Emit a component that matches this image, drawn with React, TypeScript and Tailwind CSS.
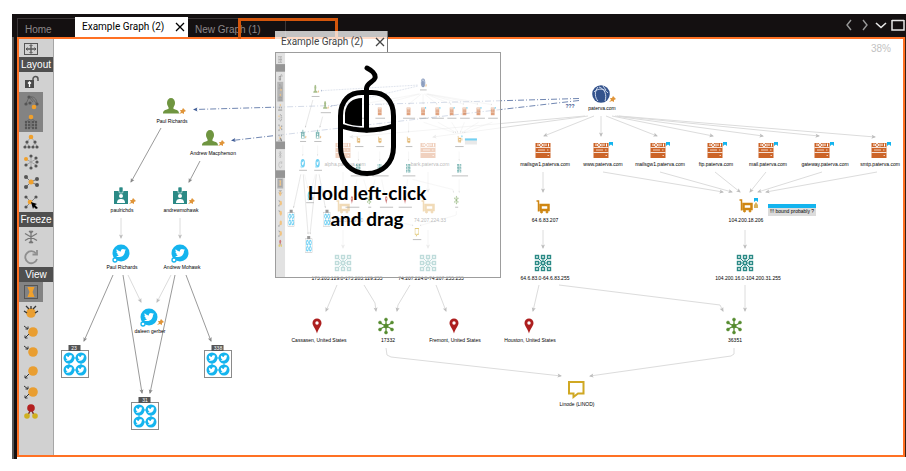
import React from "react";
import { FaTwitter } from "react-icons/fa";

type Point = [number, number];
type Kind =
  | "person"
  | "badge"
  | "twitter"
  | "globe"
  | "server"
  | "address"
  | "netblock"
  | "place"
  | "hub"
  | "phrase"
  | "group";

interface GraphNode {
  kind: Kind;
  x: number;
  y: number;
  label: string;
  labelX: number;
  labelY: number;
  pin?: boolean;
  mark?: boolean;
}

const nodes: GraphNode[] = [
  { kind: "person", x: 171, y: 106, label: "Paul Richards", labelX: 172, labelY: 121, pin: true },
  { kind: "person", x: 210, y: 138, label: "Andrew Macpherson", labelX: 213, labelY: 153, pin: true },
  { kind: "badge", x: 121, y: 196, label: "paulrichds", labelX: 122, labelY: 210, pin: true },
  { kind: "badge", x: 180, y: 196, label: "andrewmohawk", labelX: 181, labelY: 210, pin: true },
  { kind: "twitter", x: 121, y: 253, label: "Paul Richards", labelX: 122, labelY: 267 },
  { kind: "twitter", x: 180, y: 253, label: "Andrew Mohawk", labelX: 182, labelY: 267 },
  { kind: "twitter", x: 149, y: 317, label: "daleen gerber", labelX: 150, labelY: 331, pin: true },
  { kind: "globe", x: 601, y: 94, label: "paterva.com", labelX: 602, labelY: 108, pin: true },
  { kind: "server", x: 343, y: 150, label: "alpha.paterva.com", labelX: 345, labelY: 164 },
  { kind: "server", x: 428, y: 150, label: "bark.paterva.com", labelX: 430, labelY: 164 },
  { kind: "server", x: 543, y: 150, label: "mailsgw1.paterva.com", labelX: 545, labelY: 164 },
  { kind: "server", x: 601, y: 150, label: "www.paterva.com", labelX: 603, labelY: 164, mark: true },
  { kind: "server", x: 658, y: 150, label: "mailsgw1.paterva.com", labelX: 660, labelY: 164, mark: true },
  { kind: "server", x: 715, y: 150, label: "ftp.paterva.com", labelX: 716, labelY: 164, mark: true },
  { kind: "server", x: 766, y: 150, label: "mail.paterva.com", labelX: 768, labelY: 164, mark: true },
  { kind: "server", x: 822, y: 150, label: "gateway.paterva.com", labelX: 825, labelY: 164, mark: true },
  { kind: "server", x: 879, y: 150, label: "smtp.paterva.com", labelX: 880, labelY: 164, mark: true },
  { kind: "address", x: 343, y: 207, label: "173.203.129.90", labelX: 346, labelY: 220 },
  { kind: "address", x: 428, y: 207, label: "74.207.224.33", labelX: 430, labelY: 220 },
  { kind: "address", x: 543, y: 207, label: "64.6.83.207", labelX: 545, labelY: 220 },
  { kind: "address", x: 746, y: 206, label: "104.200.18.206", labelX: 746, labelY: 220, mark: true },
  { kind: "netblock", x: 343, y: 263, label: "173.203.129.0-173.203.129.255", labelX: 347, labelY: 278 },
  { kind: "netblock", x: 428, y: 263, label: "74.207.224.0-74.207.255.255", labelX: 431, labelY: 278 },
  { kind: "netblock", x: 543, y: 263, label: "64.6.83.0-64.6.83.255", labelX: 545, labelY: 278 },
  { kind: "netblock", x: 745, y: 263, label: "104.200.16.0-104.200.31.255", labelX: 748, labelY: 278 },
  { kind: "place", x: 317, y: 326, label: "Cassasen, United States", labelX: 319, labelY: 340 },
  { kind: "place", x: 454, y: 326, label: "Fremont, United States", labelX: 455, labelY: 340 },
  { kind: "place", x: 529, y: 326, label: "Houston, United States", labelX: 530, labelY: 340 },
  { kind: "hub", x: 386, y: 326, label: "17332", labelX: 388, labelY: 340 },
  { kind: "hub", x: 734, y: 326, label: "36351", labelX: 735, labelY: 340 },
  { kind: "phrase", x: 576, y: 389, label: "Linode (LINOD)", labelX: 577, labelY: 404 },
  { kind: "group", x: 75, y: 364, label: "23", labelX: 74, labelY: 348 },
  { kind: "group", x: 145, y: 416, label: "31", labelX: 145, labelY: 400 },
  { kind: "group", x: 218, y: 364, label: "338", labelX: 218, labelY: 348 },
];

const strongEdges: Point[][] = [
  [[161, 128], [131, 182]],
  [[200, 161], [189, 182]],
  [[113, 275], [84, 341]],
  [[123, 275], [142, 393]],
  [[175, 275], [150, 393]],
  [[186, 275], [211, 341]],
];

const softEdges: Point[][] = [
  [[121, 218], [121, 238]],
  [[180, 218], [180, 238]],
  [[128, 275], [141, 302]],
  [[171, 275], [157, 302]],
  [[585, 116], [350, 137]],
  [[588, 116], [433, 137]],
  [[594, 116], [544, 136]],
  [[601, 116], [601, 136]],
  [[606, 116], [657, 136]],
  [[612, 116], [713, 136]],
  [[615, 116], [763, 136]],
  [[617, 116], [819, 136]],
  [[619, 116], [875, 137]],
  [[343, 172], [343, 192]],
  [[428, 172], [428, 192]],
  [[543, 172], [543, 192]],
  [[603, 172], [723, 192]],
  [[660, 172], [732, 192]],
  [[715, 172], [740, 192]],
  [[766, 172], [750, 192]],
  [[822, 172], [758, 192]],
  [[877, 172], [766, 192]],
  [[343, 230], [343, 248]],
  [[428, 230], [428, 248]],
  [[543, 230], [543, 248]],
  [[745, 230], [745, 248]],
  [[337, 285], [326, 311]],
  [[364, 285], [375, 303], [376, 311]],
  [[410, 285], [398, 305], [397, 311]],
  [[436, 285], [446, 311]],
  [[539, 285], [533, 311]],
  [[559, 285], [720, 305], [723, 311]],
  [[745, 285], [745, 311]],
  [[386, 348], [387, 355], [391, 357], [561, 376]],
  [[734, 348], [734, 354], [731, 356], [590, 376]],
];

const linkEdges: Point[][] = [
  [[579, 98.5], [194, 109.5]],
  [[579, 100.5], [232, 140.5]],
];

interface EdgeProps {
  points: Point[];
  color: string;
  head: string;
  dash?: string;
}

function Edge({ points, color, head, dash }: EdgeProps) {
  const [ex, ey] = points[points.length - 1];
  const [px, py] = points[points.length - 2];
  const angle = (Math.atan2(ey - py, ex - px) * 180) / Math.PI;
  return (
    <g>
      <polyline
        points={points.map((p) => p.join(",")).join(" ")}
        fill="none"
        stroke={color}
        strokeWidth={1}
        strokeDasharray={dash}
      />
      <path d="M1 0L-3.500 -2L-2.500 0L-3.500 2Z" fill={head} transform={`translate(${ex} ${ey}) rotate(${angle})`} />
    </g>
  );
}

function Bird({ x, y, size }: { x: number; y: number; size: number }) {
  return <FaTwitter x={x - size / 2} y={y - size / 2} size={size} color="#fff" />;
}

function Glyph({ kind }: { kind: Kind }) {
  switch (kind) {
    case "person":
      return (
        <g fill="#6f9540">
          <ellipse cx="0" cy="-3" rx="4" ry="5" />
          <path d="M-2.500 0H2.500V3C6 4 8 4.500 8 7.500H-8C-8 4.500 -6 4 -2.500 3Z" />
        </g>
      );
    case "badge":
      return (
        <g>
          <path d="M-7 -5H7V8H-7Z" fill="#2b8a86" />
          <rect x="-2" y="-9" width="4" height="6" rx="1" fill="#2b8a86" stroke="#fff" strokeWidth=".6" />
          <circle cx="0" cy="0" r="2" fill="#fff" />
          <path d="M-4 7C-4 3.500 -2 3 0 3S4 3.500 4 7Z" fill="#fff" />
        </g>
      );
    case "twitter":
      return (
        <g>
          <circle r="8.500" fill="#14b4ee" />
          <Bird x={0} y={0} size={10} />
          <circle cx="-6" cy="7" r="2" fill="#fff" stroke="#14b4ee" strokeWidth="1.300" />
        </g>
      );
    case "globe":
      return (
        <g fill="none" stroke="#dfe6f5" strokeWidth=".9">
          <circle r="8.800" fill="#33528c" stroke="none" />
          <path d="M-3 -7C-7 -2 -6 4 -3 7M-2 -7C4 -5 6 1 4 7M-7 -2C-3 -6 3 -6 7 -1M2 -8L5 -4" />
        </g>
      );
    case "server":
      return (
        <g>
          <rect x="-7.500" y="-7" width="15" height="15" fill="#cc6428" />
          <path d="M-7.500 -2.500H7.500M-7.500 2.500H7.500" stroke="#fff" strokeWidth=".8" />
          <circle cx="-2" cy="-5" r="1.500" fill="none" stroke="#fff" />
          <path d="M1 -6.500V-3.500M3 -6.500V-4M5.500 -6.500V-3.500M-5 -6.500V-4" stroke="#fff" strokeWidth="1" />
          <path d="M-5 0H2M4 0H5.500" stroke="#f3cdb8" strokeWidth="1" />
          <path d="M4.500 5.500H6" stroke="#f3cdb8" strokeWidth="1" />
        </g>
      );
    case "address":
      return (
        <g fill="none" stroke="#cf8612">
          <path d="M-6.500 -6H-4.500V4.500" strokeWidth="1.500" />
          <rect x="-2.500" y="-2" width="8" height="5" strokeWidth="2.500" />
          <circle cx="-1.500" cy="5" r="1" fill="#cf8612" />
          <circle cx="4" cy="5" r="1" fill="#cf8612" />
        </g>
      );
    case "netblock":
      return (
        <g fill="none" stroke="#2b8a86" strokeWidth="1.400">
          <path d="M-5 -5L5 5M5 -5L-5 5M0 -4V4M-4 0H4" strokeWidth="1" />
          {[-6, 0, 6].map((gx) =>
            [-6, 0, 6].map((gy) => (
              <rect key={`${gx}:${gy}`} x={gx - 1.5} y={gy - 1.5} width="3" height="3" fill="#fff" />
            )),
          )}
        </g>
      );
    case "place":
      return (
        <g>
          <path d="M0 7.500C-1 3 -4.500 0 -4.500 -3A4.500 4.500 0 0 1 4.500 -3C4.500 0 1 3 0 7.500Z" fill="#ad1f1f" />
          <circle cx="0" cy="-3" r="1.700" fill="#fff" />
        </g>
      );
    case "hub":
      return (
        <g fill="#558b2f" stroke="#558b2f">
          <path d="M0 -6V6M-6 -3L6 3M-6 3L6 -3" strokeWidth="1.200" />
          <circle r="2" />
          {[[0, -6.5], [0, 6.5], [-6, -3.5], [6, -3.5], [-6, 3.5], [6, 3.5]].map(([cx, cy]) => (
            <circle key={`${cx}:${cy}`} cx={cx} cy={cy} r="1.500" strokeWidth=".5" />
          ))}
        </g>
      );
    case "phrase":
      return <path d="M-7 -7H7.500V4.500H2L-2.500 8V4.500H-7Z" fill="none" stroke="#d0a823" strokeWidth="2" />;
    case "group":
      return (
        <g>
          <rect x="-13.500" y="-13.500" width="27" height="27" fill="#fff" stroke="#8a8a8a" strokeWidth="1" />
          <rect x="-6.500" y="-19" width="12" height="6" fill="#555" />
          <path d="M-6 -6H6V6H-6Z" fill="none" stroke="#14b4ee" strokeWidth="1" />
          {[-6, 6].map((gx) =>
            [-6, 6].map((gy) => (
              <g key={`${gx}:${gy}`}>
                <circle cx={gx} cy={gy} r="5.500" fill="#14b4ee" />
                <Bird x={gx} y={gy} size={7} />
              </g>
            )),
          )}
        </g>
      );
  }
}

function GraphDrawing() {
  return (
    <g>
      {softEdges.map((points, i) => (
        <Edge key={i} points={points} color="#dcdcdc" head="#bdbdbd" />
      ))}
      {strongEdges.map((points, i) => (
        <Edge key={i} points={points} color="#9a9a9a" head="#8a8a8a" />
      ))}
      {linkEdges.map((points, i) => (
        <Edge key={i} points={points} color="#7187b2" head="#3f5c96" dash="6 2 1 2" />
      ))}
      {nodes.map((n, i) => (
        <g key={i} transform={`translate(${n.x} ${n.y})`}>
          <Glyph kind={n.kind} />
          {n.pin && <path d="M8 8L10 6L9 4L11 4L12 2L15 5L13 6L13 8L11 7Z" fill="#e0953a" />}
          {n.mark && <path d="M8 -8H12V-4L10 -5.500L8 -4Z" fill="#14b4ee" />}
        </g>
      ))}
      <path d="M754 208V205L756 202L758 205V208Z" fill="#d8b45c" />
      <rect x="768" y="204" width="48" height="12" fill="#dcdcdc" />
      <rect x="768" y="204" width="48" height="4" fill="#14b4ee" />
    </g>
  );
}

function Dots({ at, r = 1.6 }: { at: Point[]; r?: number }) {
  return (
    <>
      {at.map(([cx, cy]) => (
        <circle key={`${cx}:${cy}`} cx={cx} cy={cy} r={r} fill="#555" />
      ))}
    </>
  );
}

const orange = "#f0a02c";
const inward = "M-7 -6L-3 -3M-3 -5.500V-3H-5.500";
const outward = "M-2 2L-6 6M-6 3.500V6H-3.500";

const toolGlyphs: Record<string, React.ReactNode> = {
  fit: (
    <g fill="none" stroke="#555">
      <rect x="-6.500" y="-5.500" width="13" height="11" />
      <path d="M0 -4V4M-5 0H5" strokeWidth="1.300" />
      <path d="M-1.500 -3L0 -4.500L1.500 -3M-1.500 3L0 4.500L1.500 3M-3.500 -1.500L-5 0L-3.500 1.500M3.500 -1.500L5 0L3.500 1.500" />
    </g>
  ),
  lock: (
    <g>
      <path d="M2 -1V-3A2.500 2.500 0 0 1 7 -3V-1" fill="none" stroke="#555" strokeWidth="1.500" />
      <rect x="-6" y="-2" width="9" height="8" fill="#4a4a4a" />
      <path d="M-1.500 5V1M-3 1.500L-1.500 0L0 1.500" stroke="#fff" strokeWidth="1.300" fill="none" />
    </g>
  ),
  block: (
    <g>
      <path d="M-5 2L-2 -5L2 0M0 -5L6 2M-2 -5C2 -6 6 -4 6 2" fill="none" stroke="#666" />
      <Dots at={[[-5, 2], [-2, -5], [-1, 1], [6, 2]]} />
      <circle cx="3" cy="5" r="2.300" fill={orange} />
    </g>
  ),
  hierarchy: (
    <g>
      <path d="M0 -4L-5 0V6M0 -4V6M0 -4L5 0V6" fill="none" stroke="#666" />
      <Dots at={[[-5, 0], [-2, 0], [2, 0], [5, 0], [-5, 3], [-2, 3], [2, 3], [5, 3], [-5, 6], [-2, 6], [2, 6], [5, 6]]} r={1.2} />
      <circle cx="0" cy="-5" r="2.300" fill={orange} />
    </g>
  ),
  tree: (
    <g>
      <path d="M0 -5L-4 0L-6 5M0 -5L4 0L6 5M-4 0L-2 5M4 0L2 5" fill="none" stroke="#999" strokeWidth=".8" />
      <Dots at={[[-4, 0], [4, 0], [-6, 5], [-2, 5], [2, 5], [6, 5]]} />
      <circle cx="0" cy="-5" r="2.300" fill={orange} />
    </g>
  ),
  circular: (
    <g>
      <path d="M0 -6V6M-5 -3L5 3M-5 3L5 -3" stroke="#999" strokeWidth=".8" />
      <Dots at={[[0, -6], [0, 6], [5, -4], [6, 0], [5, 4], [-5, 3]]} />
      <circle cx="-5" cy="-3" r="2" fill={orange} />
    </g>
  ),
  organic: (
    <g>
      <path d="M-5 -5L0 0L-5 5M0 0L6 -3M0 0L6 3" fill="none" stroke="#777" />
      <Dots at={[[-5, -5], [-5, 5], [6, -3], [6, 3]]} r={2} />
      <circle cx="0" cy="0" r="2.500" fill={orange} />
    </g>
  ),
  manual: (
    <g>
      <path d="M-5 -5L5 5M5 -5L-5 5" stroke="#888" />
      <Dots at={[[-5, -5], [5, -5], [-5, 5]]} />
      <circle cx="-1" cy="0" r="2.300" fill={orange} />
      <path d="M0 0L6 2L4 3L7 6L5 7L3 5L2 7Z" fill="#000" />
    </g>
  ),
  freeze: (
    <path
      d="M0 -6.500V6.500M-6 -3.500L6 3.500M-6 3.500L6 -3.500M-2 -6L0 -4L2 -6M-2 6L0 4L2 6"
      fill="none"
      stroke="#777"
      strokeWidth="1.300"
    />
  ),
  refresh: (
    <g fill="none" stroke="#8f8f8f" strokeWidth="1.800">
      <path d="M5 -3.500A6 6 0 1 0 6 2" />
      <path d="M6 -7V-2.500H1.500" />
    </g>
  ),
  normal: (
    <g>
      <rect x="-6.500" y="-6.500" width="13" height="13" fill="none" stroke="#555" />
      <path d="M-3.500 -5H3.500L1.500 0L3.500 5H-3.500L-1.500 0Z" fill={orange} />
    </g>
  ),
  fanIn: (
    <g>
      <circle cx="0" cy="1" r="4.800" fill="#e99e31" />
      <path d="M-7 -1L-4 1M-5 -6L-2 -3M0 -6V-3M5 -6L2 -3M7 -1L4 1" stroke="#333" strokeWidth="1.300" />
    </g>
  ),
  ballBoth: (
    <g>
      <circle cx="2" cy="0" r="4.800" fill="#e99e31" />
      <path d={`${inward}${outward}`} fill="none" stroke="#333" />
    </g>
  ),
  ballIn: (
    <g>
      <circle cx="2" cy="0" r="4.800" fill="#e99e31" />
      <path d={inward} fill="none" stroke="#333" />
    </g>
  ),
  ballOut: (
    <g>
      <circle cx="2" cy="-1" r="4.800" fill="#e99e31" />
      <path d={outward} fill="none" stroke="#333" />
    </g>
  ),
  people: (
    <g>
      <path d="M0 -3L-4 5M0 -3L4 5" stroke="#7a3030" strokeWidth="1.500" />
      <circle cx="0" cy="-4" r="3.800" fill="#b32020" />
      <circle cx="-4" cy="4" r="2.800" fill="#d0b020" />
      <circle cx="4" cy="4" r="2.800" fill="#d0b020" />
    </g>
  ),
};

interface ToolProps {
  name: string;
  label: string;
  active?: boolean;
}

function Tool({ name, label, active }: ToolProps) {
  return (
    <button
      type="button"
      aria-label={label}
      aria-pressed={active}
      className={`flex h-5 w-6 items-center justify-center ${active ? "bg-[#838383]" : ""}`}
    >
      <svg width="18" height="18" viewBox="-9 -9 18 18" aria-hidden="true">
        {toolGlyphs[name]}
      </svg>
    </button>
  );
}

function Heading({ children }: { children: string }) {
  return (
    <h2 className="h-[15px] bg-[#4f4f4f] text-center text-[10px] leading-[16px] text-white">{children}</h2>
  );
}

const sections: { title?: string; tools: ToolProps[] }[] = [
  { tools: [{ name: "fit", label: "Zoom to fit" }] },
  {
    title: "Layout",
    tools: [
      { name: "lock", label: "Unlock layout" },
      { name: "block", label: "Block layout", active: true },
      { name: "hierarchy", label: "Hierarchical layout", active: true },
      { name: "tree", label: "Tree layout" },
      { name: "circular", label: "Circular layout" },
      { name: "organic", label: "Organic layout" },
      { name: "manual", label: "Interactive layout" },
    ],
  },
  {
    title: "Freeze",
    tools: [
      { name: "freeze", label: "Freeze graph" },
      { name: "refresh", label: "Refresh graph" },
    ],
  },
  {
    title: "View",
    tools: [
      { name: "normal", label: "Normal view", active: true },
      { name: "fanIn", label: "Ball size by links" },
      { name: "ballBoth", label: "Ball size by rank" },
      { name: "ballIn", label: "Ball size by incoming links" },
      { name: "ballOut", label: "Ball size by outgoing links" },
      { name: "ballBoth", label: "Ball size by all links" },
      { name: "people", label: "Collections" },
    ],
  },
];

function Toolbar() {
  return (
    <aside className="flex w-[35px] shrink-0 flex-col border-r border-[#a6a6a6] bg-[#d1d1d1] pb-8">
      {sections.map((s, i) => (
        <div key={i} className={i === 0 ? "-mb-0.5" : ""}>
          {s.title && <Heading>{s.title}</Heading>}
          {s.tools.map((t) => (
            <Tool key={t.label} {...t} />
          ))}
        </div>
      ))}
    </aside>
  );
}

const ORIGIN_X = 54;
const ORIGIN_Y = 39;

function GraphCanvas() {
  return (
    <div className="relative flex-1 overflow-hidden bg-white">
      <svg className="absolute top-0 left-0" width="852" height="416" viewBox="54 39 852 416" aria-hidden="true">
        <GraphDrawing />
      </svg>
      {nodes.map((n, i) => (
        <span
          key={i}
          className={`absolute -translate-x-1/2 -translate-y-1/2 text-[5px] leading-none whitespace-nowrap ${
            n.kind === "group" ? "text-white" : "text-black"
          }`}
          style={{ left: n.labelX - ORIGIN_X, top: n.labelY - ORIGIN_Y }}
        >
          {n.label}
        </span>
      ))}
      <span
        className="absolute -translate-x-1/2 -translate-y-1/2 text-[5px] leading-none font-bold text-[#2f4d8c]"
        style={{ left: 570 - ORIGIN_X, top: 106 - ORIGIN_Y }}
      >
        ???
      </span>
      <span
        className="absolute -translate-x-1/2 -translate-y-1/2 text-[5px] leading-none whitespace-nowrap text-black"
        style={{ left: 792 - ORIGIN_X, top: 211 - ORIGIN_Y }}
      >
        !!! bound probably ?
      </span>
      <span className="absolute top-1 right-3 text-[10px] leading-[12px] text-[#c2c2c2]">38%</span>
    </div>
  );
}

function Cross() {
  return (
    <svg className="block" width="10" height="10" viewBox="0 0 10 10" aria-hidden="true">
      <path d="M1 1L9 9M9 1L1 9" stroke="currentColor" strokeWidth="1.300" fill="none" />
    </svg>
  );
}

function TabBar() {
  return (
    <header className="flex h-[23px] items-end justify-between bg-[#141011]">
      <nav className="flex items-end pl-[5px]">
        <button type="button" className="h-[19px] w-[58px] border-t border-l border-[#3b3638] pl-[7px] text-left text-[10px] leading-[22px] text-[#8b8688]">
          Home
        </button>
        <div className="flex h-5 w-[113px] items-center justify-between bg-white pr-[3px] pl-[7px] text-black">
          <button type="button" className="font-[Roboto,sans-serif] text-[10px] leading-5">
            Example Graph (2)
          </button>
          <button type="button" aria-label="Close Example Graph (2)">
            <Cross />
          </button>
        </div>
        <button type="button" className="h-[19px] w-[98px] border-t border-r border-[#3b3638] pl-[7px] text-left text-[10px] leading-[22px] text-[#8b8688]">
          New Graph (1)
        </button>
      </nav>
      <div className="flex h-5 items-center gap-1 pr-px pb-1">
        <button type="button" aria-label="Previous tab" className="text-[#999]">
          <svg width="12" height="12" viewBox="0 0 12 12">
            <path d="M8 1L4 6L8 11" fill="none" stroke="currentColor" strokeWidth="1.400" />
          </svg>
        </button>
        <button type="button" aria-label="Next tab" className="text-[#999]">
          <svg width="12" height="12" viewBox="0 0 12 12">
            <path d="M4 1L8 6L4 11" fill="none" stroke="currentColor" strokeWidth="1.400" />
          </svg>
        </button>
        <button type="button" aria-label="List tabs" className="text-[#e8e8e8]">
          <svg width="12" height="12" viewBox="0 0 12 12">
            <path d="M1 4L6 8.500L11 4" fill="none" stroke="currentColor" strokeWidth="1.600" />
          </svg>
        </button>
        <button type="button" aria-label="Maximize" className="text-[#e8e8e8]">
          <svg width="14" height="12" viewBox="0 0 14 12">
            <path d="M1 1.500H13M1 1V11H13V1" fill="none" stroke="currentColor" strokeWidth="1.500" />
          </svg>
        </button>
      </div>
    </header>
  );
}

function Thumbnail() {
  return (
    <svg className="block h-full w-full opacity-60" viewBox="14 35 894 443" preserveAspectRatio="none" aria-hidden="true">
      <rect x="14" y="35" width="36" height="443" fill="#cfcfcf" />
      {[57, 210, 267].map((y) => (
        <rect key={y} x="14" y={y} width="36" height="15" fill="#4f4f4f" />
      ))}
      <rect x="19" y="92" width="24" height="39" fill="#838383" />
      <rect x="19" y="283" width="24" height="20" fill="#838383" />
      {["fit", "", "lock", "block", "hierarchy", "tree", "circular", "organic", "manual"].map((k, i) =>
        k ? (
          <g key={k} transform={`translate(31 ${i === 0 ? 48 : 43 + i * 20})`}>
            {toolGlyphs[k]}
          </g>
        ) : null,
      )}
      {["freeze", "refresh"].map((k, i) => (
        <g key={k} transform={`translate(31 ${236 + i * 20})`}>
          {toolGlyphs[k]}
        </g>
      ))}
      {["normal", "fanIn", "ballBoth", "ballIn", "ballOut", "ballBoth", "people"].map((k, i) => (
        <g key={i} transform={`translate(31 ${292 + i * 20})`}>
          {toolGlyphs[k]}
        </g>
      ))}
      <GraphDrawing />
      {nodes
        .filter((n) => n.kind !== "group")
        .map((n, i) => (
          <rect
            key={i}
            x={n.labelX - n.label.length * 1.2}
            y={n.labelY - 1}
            width={n.label.length * 2.4}
            height="2"
            fill="#999"
          />
        ))}
    </svg>
  );
}

function DragGhost() {
  return (
    <div className="absolute top-[17px] left-[263px] w-[226px]">
      <div className="flex h-[21px] w-[113px] items-center justify-between border-r border-[#777] bg-white/75 pr-[2px] pl-[6px] text-[#444]">
        <span className="font-[Roboto,sans-serif] text-[10px] leading-5">Example Graph (2)</span>
        <Cross />
      </div>
      <div className="h-[226px] border border-[#9d9d9d] bg-white/70">
        <Thumbnail />
      </div>
      <div className="absolute top-[34px] left-0 flex w-[184px] flex-col items-center gap-[3px]">
        <svg width="60" height="112" viewBox="337 65 60 112" aria-hidden="true">
          <g fill="none" stroke="#000" strokeWidth="5" strokeLinecap="round">
            <path d="M367 68C371 70 376 74 375 78C374 82 366 83 366.500 89V130" />
            <path d="M340.500 116C340.500 100 350 92.500 362 92.500H372C384 92.500 393.500 100 393.500 116V147C393.500 163 382 173.500 367 173.500S340.500 163 340.500 147Z" />
            <path d="M341 126C357 131.500 377 131.500 393 126" />
          </g>
          <path d="M362 98V126C355 126 350 125 345 123V113C346 103 353 98 362 98Z" fill="#000" />
        </svg>
        <p className="text-center font-[Lato,sans-serif] text-[19px] leading-[26px] font-bold whitespace-nowrap text-black">
          Hold left-click
          <br />
          and drag
        </p>
      </div>
    </div>
  );
}

export default function App() {
  return (
    <div className="flex min-h-screen flex-col bg-white pt-[14px] pb-3 pl-3 font-['Liberation_Sans',Arial,sans-serif]">
      <main className="relative flex flex-1 flex-col">
        <TabBar />
        <div className="flex flex-1">
          <div className="w-[5px] border-l-2 border-[#565656] bg-[#141011]" />
          <div className="mb-0.5 flex flex-1 border-2 border-[#ff7124]">
            <Toolbar />
            <GraphCanvas />
          </div>
          <div className="mb-0.5 w-px bg-[#3a2014]" />
        </div>
        <div className="absolute top-1 left-[226px] h-[21px] w-[100px] border-t-3 border-r-3 border-l-3 border-[#d4560c]">
          <div className="absolute inset-x-0 -bottom-0.5 h-0.5 bg-white" />
        </div>
        <DragGhost />
      </main>
    </div>
  );
}
